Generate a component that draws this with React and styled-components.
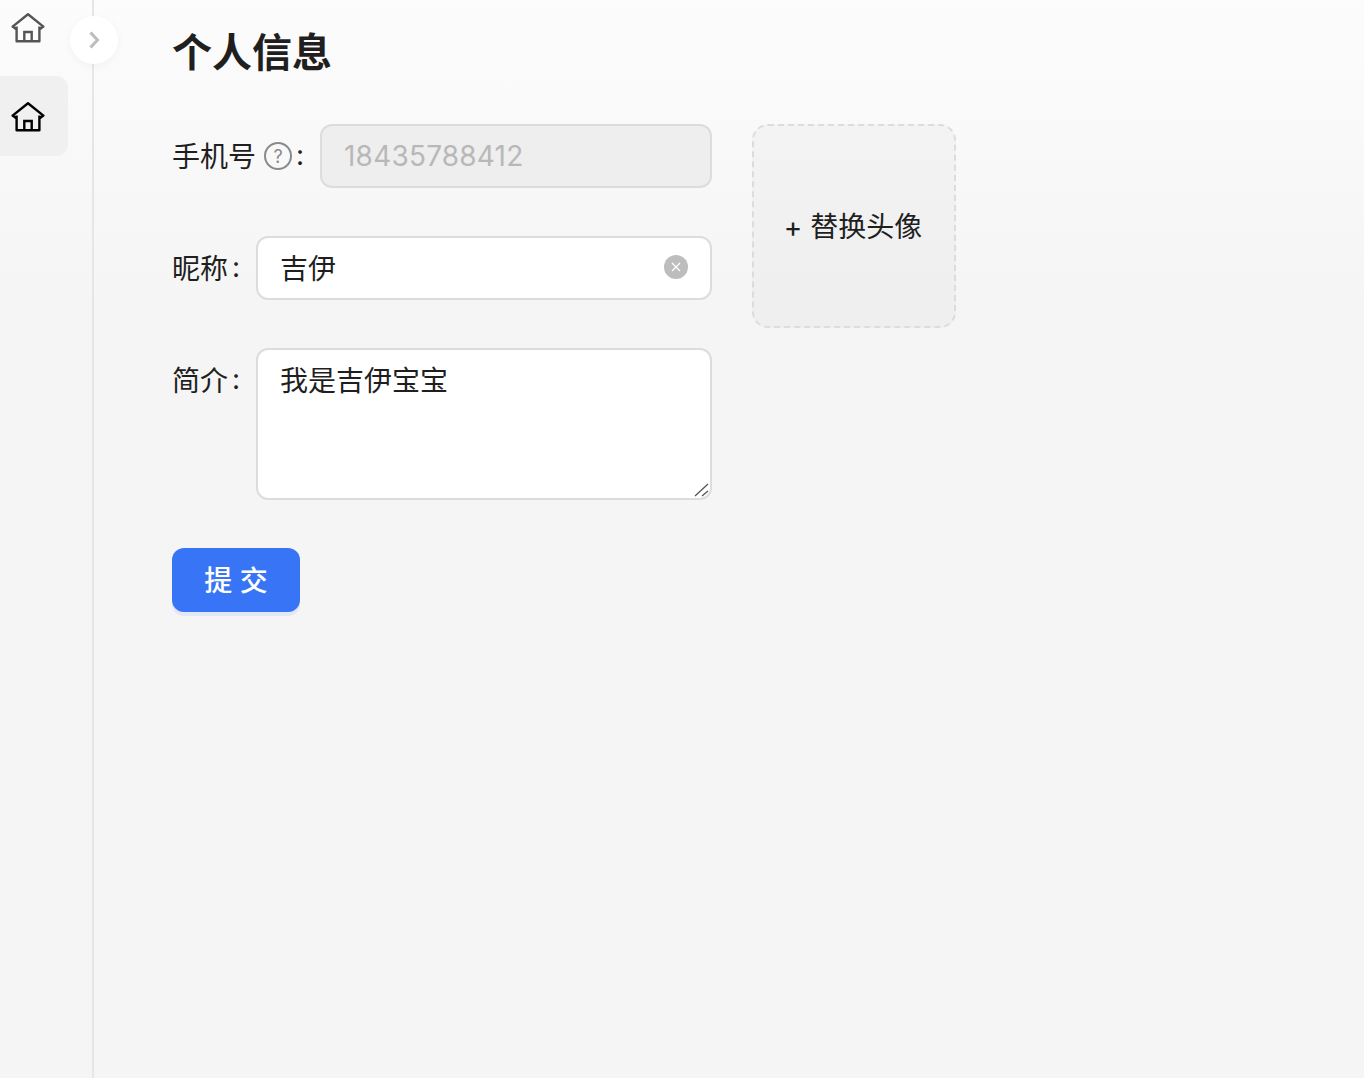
import React, { useState } from 'react';
import styled, { createGlobalStyle } from 'styled-components';

const GlobalStyle = createGlobalStyle`
  html, body {
    margin: 0;
    padding: 0;
    background: #f5f5f5;
  }
  * {
    box-sizing: border-box;
  }
`;

const FONT = `Inter, "Noto Sans CJK SC", sans-serif`;

const HomeIcon = ({ color }) => (
  <svg width="34" height="34" viewBox="0 0 34 34" fill="none">
    <path
      d="M5.6 18.4 1.6 15.6 17 3.2 32.4 15.6 28.4 18.4M5.6 15.5V30.2H28.4V15.5"
      stroke={color}
      strokeWidth="2.4"
      strokeLinejoin="round"
    />
    <path d="M13.3 30.2V21H20.7V30.2" stroke={color} strokeWidth="2.4" />
  </svg>
);

const App = () => {
  const [nickname, setNickname] = useState('吉伊');
  const [intro, setIntro] = useState('我是吉伊宝宝');

  return (
    <>
      <GlobalStyle />
      <Page>
        <Sidebar>
          <NavItem>
            <HomeIcon color="#555555" />
          </NavItem>
          <NavItem $active>
            <HomeIcon color="#000000" />
          </NavItem>
          <Toggle>
            <svg width="14" height="20" viewBox="0 0 14 20" fill="none">
              <path d="M3.5 2.5 10.5 10 3.5 17.5" stroke="#bdbdbd" strokeWidth="3" />
            </svg>
          </Toggle>
        </Sidebar>
        <Main>
          <Title>个人信息</Title>
          <FormArea>
            <Fields>
              <Row>
                <Label>
                  手机号
                  <HelpMark>?</HelpMark>
                  <Colon>:</Colon>
                </Label>
                <Input value="18435788412" disabled readOnly $disabled />
              </Row>
              <Row>
                <Label>
                  昵称
                  <Colon>:</Colon>
                </Label>
                <InputWrap>
                  <Input value={nickname} onChange={(e) => setNickname(e.target.value)} />
                  <ClearButton>
                    <svg width="10" height="10" viewBox="0 0 10 10" fill="none">
                      <path d="M1 1 9 9M9 1 1 9" stroke="#fff" strokeWidth="1.3" />
                    </svg>
                  </ClearButton>
                </InputWrap>
              </Row>
              <Row>
                <Label>
                  简介
                  <Colon>:</Colon>
                </Label>
                <InputWrap>
                  <TextArea value={intro} onChange={(e) => setIntro(e.target.value)} />
                  <ResizeGrip width="16" height="14" viewBox="0 0 16 14" fill="none">
                    <path d="M1 13 14 1M8 13 14 8" stroke="#555" strokeWidth="1.3" />
                  </ResizeGrip>
                </InputWrap>
              </Row>
            </Fields>
            <AvatarBox>+ 替换头像</AvatarBox>
          </FormArea>
          <SubmitButton>提 交</SubmitButton>
        </Main>
      </Page>
    </>
  );
};

export default App;

const Page = styled.div`
  display: flex;
  min-height: 1078px;
  font-family: ${FONT};
  color: #1f1f1f;
  background: linear-gradient(180deg, #fcfcfc 0, #f5f5f5 300px);
`;
const Sidebar = styled.aside`
  position: relative;
  flex: none;
  width: 94px;
  border-right: 2px solid #e6e6e6;
  display: flex;
  flex-direction: column;
  gap: 20px;
`;
const NavItem = styled.div`
  width: 68px;
  height: ${(p) => (p.$active ? '80px' : '56px')};
  padding: ${(p) => (p.$active ? '1px 0 0 11px' : '0 0 0 11px')};
  display: flex;
  align-items: center;
  border-radius: 0 12px 12px 0;
  background: ${(p) => (p.$active ? '#f0f0f0' : 'transparent')};
`;
const Toggle = styled.div`
  position: absolute;
  top: 16px;
  left: 70px;
  width: 48px;
  height: 48px;
  border-radius: 50%;
  background: #ffffff;
  box-shadow: 0 2px 8px rgba(0, 0, 0, 0.04);
  display: flex;
  align-items: center;
  justify-content: center;
`;
const Main = styled.main`
  flex: 1;
  padding: 27px 0 0 78px;
`;
const Title = styled.h1`
  margin: 0 0 45px;
  font-size: 40px;
  line-height: 52px;
  font-weight: 700;
  color: #1f1f1f;
`;
const FormArea = styled.div`
  display: flex;
  align-items: flex-start;
  gap: 40px;
`;
const Fields = styled.div`
  width: 540px;
  display: flex;
  flex-direction: column;
  gap: 48px;
`;
const Row = styled.div`
  display: flex;
  align-items: flex-start;
`;
const Label = styled.label`
  flex: none;
  height: 64px;
  margin-right: 16px;
  padding-bottom: 2px;
  display: flex;
  align-items: center;
  font-size: 28px;
  color: #1f1f1f;
`;
const HelpMark = styled.span`
  width: 28px;
  height: 28px;
  margin: 2px 0 0 8px;
  border: 2px solid #8a8a8a;
  border-radius: 50%;
  display: flex;
  align-items: center;
  justify-content: center;
  font-size: 18px;
  color: #8a8a8a;
`;
const Colon = styled.span`
  width: 8px;
  margin-left: 4px;
  font-size: 28px;
  line-height: 1;
`;
const InputWrap = styled.div`
  position: relative;
  flex: 1;
  display: flex;
`;
const Input = styled.input`
  flex: 1;
  width: 100%;
  min-width: 0;
  height: 64px;
  padding: ${(p) => (p.$disabled ? '0 22px' : '0 22px 2px')};
  border: 2px solid #dcdcdc;
  border-radius: 12px;
  outline: none;
  font-family: ${FONT};
  font-size: 28px;
  letter-spacing: ${(p) => (p.$disabled ? '0.2px' : '0')};
  color: ${(p) => (p.$disabled ? '#b8b8b8' : '#1f1f1f')};
  background: ${(p) => (p.$disabled ? '#eeeeee' : '#ffffff')};
`;
const ClearButton = styled.span`
  position: absolute;
  top: 19px;
  right: 24px;
  width: 24px;
  height: 24px;
  border-radius: 50%;
  background: #bdbdbd;
  display: flex;
  align-items: center;
  justify-content: center;
`;
const TextArea = styled.textarea`
  flex: 1;
  min-width: 0;
  height: 152px;
  padding: 13px 22px;
  border: 2px solid #dcdcdc;
  border-radius: 12px;
  outline: none;
  resize: none;
  font-family: ${FONT};
  font-size: 28px;
  line-height: 36px;
  color: #1f1f1f;
  background: #ffffff;
`;
const ResizeGrip = styled.svg`
  position: absolute;
  right: 2px;
  bottom: 3px;
`;
const AvatarBox = styled.div`
  flex: none;
  width: 204px;
  height: 204px;
  padding: 0 2px 2px 0;
  border: 2px dashed #dcdcdc;
  border-radius: 16px;
  background: rgba(0, 0, 0, 0.025);
  display: flex;
  align-items: center;
  justify-content: center;
  font-size: 28px;
  color: #1f1f1f;
`;
const SubmitButton = styled.button`
  display: block;
  width: 128px;
  height: 64px;
  margin-top: 48px;
  padding: 0 0 2px;
  border: none;
  border-radius: 12px;
  background: #3875f6;
  box-shadow: 0 4px 0 rgba(56, 117, 246, 0.1);
  font-family: ${FONT};
  font-size: 28px;
  font-weight: 500;
  color: #ffffff;
`;
